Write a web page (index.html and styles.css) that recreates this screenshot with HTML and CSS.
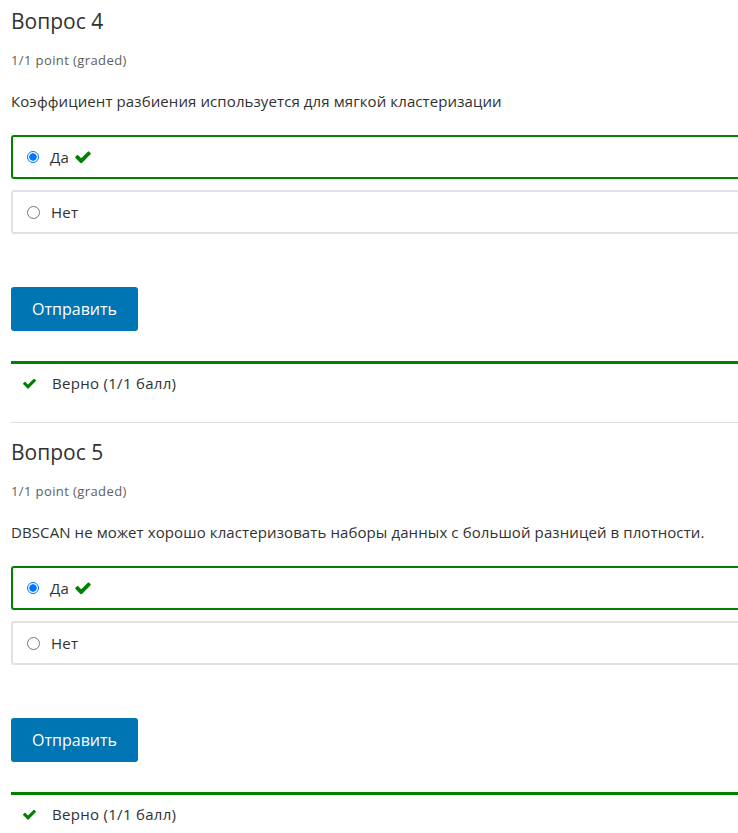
FILE: index.html
```html
<!DOCTYPE html>
<html lang="ru">
<head>
<meta charset="utf-8">
<link rel="stylesheet" href="styles.css">
</head>
<body>
<div class="page">
  <section class="problem">
    <h3 class="title">Вопрос 4</h3>
    <div class="points">1/1 point (graded)</div>
    <p class="prompt">Коэффициент разбиения используется для мягкой кластеризации</p>
    <div class="choices">
      <label class="choice correct">
        <span class="radio checked"></span>
        <span class="label">Да</span>
        <svg class="check" viewBox="0 0 1792 1792" width="18" height="18"><path fill="#008100" d="M1671 566q0 40-28 68l-724 724-136 136q-28 28-68 28t-68-28l-136-136-362-362q-28-28-28-68t28-68l136-136q28-28 68-28t68 28l294 295 656-657q28-28 68-28t68 28l136 136q28 28 28 68z"/></svg>
      </label>
      <label class="choice">
        <span class="radio"></span>
        <span class="label">Нет</span>
      </label>
    </div>
    <button class="submit">Отправить</button>
    <div class="result">
      <svg class="check small" viewBox="0 0 1792 1792" width="15" height="15"><path fill="#008100" d="M1671 566q0 40-28 68l-724 724-136 136q-28 28-68 28t-68-28l-136-136-362-362q-28-28-28-68t28-68l136-136q28-28 68-28t68 28l294 295 656-657q28-28 68-28t68 28l136 136q28 28 28 68z"/></svg>
      <span>Верно (1/1 балл)</span>
    </div>
  </section>
  <section class="problem">
    <h3 class="title">Вопрос 5</h3>
    <div class="points">1/1 point (graded)</div>
    <p class="prompt">DBSCAN не может хорошо кластеризовать наборы данных с большой разницей в плотности.</p>
    <div class="choices">
      <label class="choice correct">
        <span class="radio checked"></span>
        <span class="label">Да</span>
        <svg class="check" viewBox="0 0 1792 1792" width="18" height="18"><path fill="#008100" d="M1671 566q0 40-28 68l-724 724-136 136q-28 28-68 28t-68-28l-136-136-362-362q-28-28-28-68t28-68l136-136q28-28 68-28t68 28l294 295 656-657q28-28 68-28t68 28l136 136q28 28 28 68z"/></svg>
      </label>
      <label class="choice">
        <span class="radio"></span>
        <span class="label">Нет</span>
      </label>
    </div>
    <button class="submit">Отправить</button>
    <div class="result">
      <svg class="check small" viewBox="0 0 1792 1792" width="15" height="15"><path fill="#008100" d="M1671 566q0 40-28 68l-724 724-136 136q-28 28-68 28t-68-28l-136-136-362-362q-28-28-28-68t28-68l136-136q28-28 68-28t68 28l294 295 656-657q28-28 68-28t68 28l136 136q28 28 28 68z"/></svg>
      <span>Верно (1/1 балл)</span>
    </div>
  </section>
</div>
</body>
</html>
```
FILE: styles.css
```css
html, body {
  margin: 0;
  padding: 0;
  background: #fff;
  overflow: hidden;
}
body {
  font-family: "Open Sans", "Noto Sans", sans-serif;
  color: #313131;
}
.page {
  padding-left: 11px;
  width: 760px;
}
.problem {
  border-bottom: 1px solid #ddd;
  padding-bottom: 20px;
}
.problem + .problem {
  border-bottom: none;
  padding-top: 8px;
}
.title {
  margin: 0;
  padding-top: 6px;
  font-size: 21px;
  font-weight: 400;
  line-height: 30px;
  color: #313131;
}
.points {
  margin-top: 15px;
  font-size: 13px;
  letter-spacing: 0.4px;
  line-height: 18px;
  color: #5e5e5e;
}
.prompt {
  margin: 21px 0 0;
  font-size: 15px;
  letter-spacing: 0.1px;
  line-height: 22px;
}
.choices {
  margin-top: 23px;
  display: flex;
  flex-direction: column;
  gap: 11px;
}
.choice {
  display: flex;
  align-items: center;
  height: 40px;
  border: 2px solid #e2e2e2;
  border-radius: 3px;
  padding-left: 14px;
  font-size: 15px;
  letter-spacing: 0.2px;
}
.choice.correct {
  border-color: #008100;
}
.radio {
  width: 11px;
  height: 11px;
  border: 1px solid #767676;
  border-radius: 50%;
  box-sizing: content-box;
  margin-right: 11px;
}
.radio.checked {
  border-color: #0075ff;
  background: radial-gradient(circle, #0075ff 0 3.4px, #fff 4px);
  border-width: 1.5px;
  width: 10px;
  height: 10px;
}
.label {
  line-height: 20px;
}
.check {
  margin-left: 5px;
}
.submit {
  display: block;
  margin-top: 53px;
  width: 127px;
  height: 44px;
  border: none;
  border-radius: 3px;
  background: #0075b4;
  color: #fff;
  font-family: "Open Sans", "Noto Sans", sans-serif;
  font-size: 16px;
  padding: 0;
}
.result {
  margin-top: 30px;
  border-top: 3px solid #008100;
  display: flex;
  align-items: center;
  padding-left: 11px;
  height: 38px;
  font-size: 15px;
  letter-spacing: 0.3px;
}
.result .check {
  margin: 0 15px 0 0;
}
```
